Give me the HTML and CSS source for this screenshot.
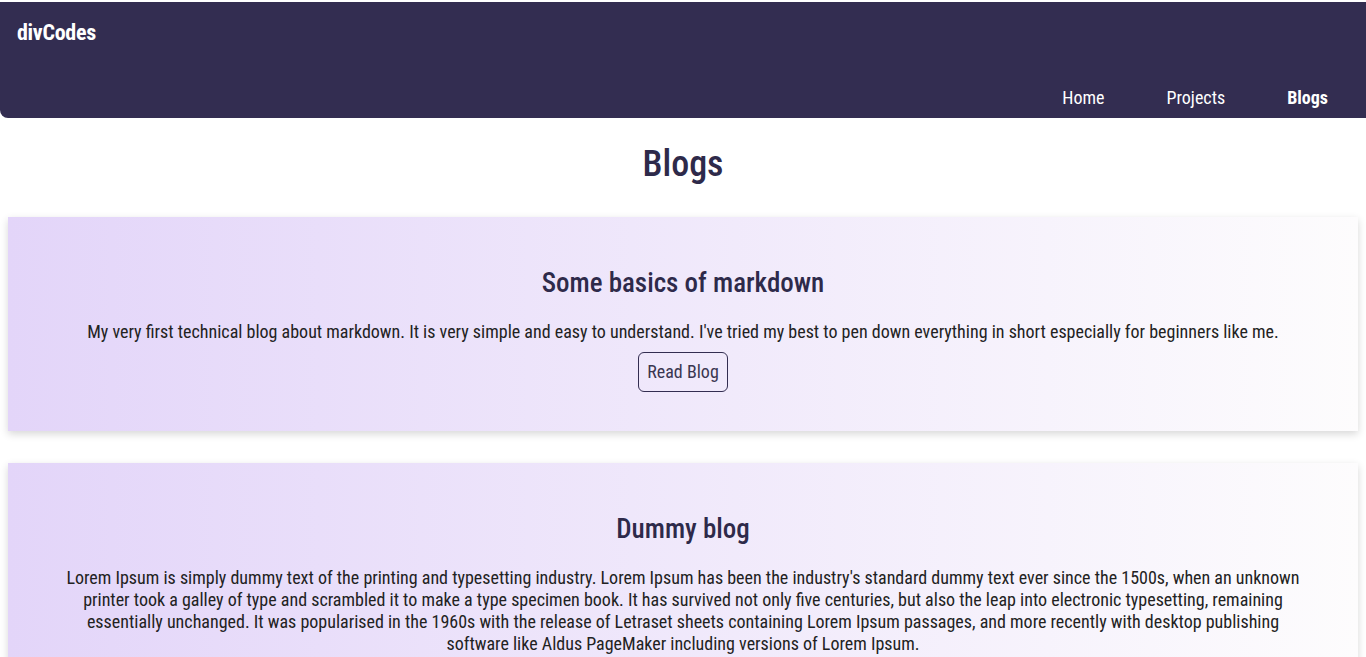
FILE: index.html
```html
<!DOCTYPE html>
<html lang="en">
<head>
<meta charset="utf-8">
<title>Blogs | divCodes</title>
<link rel="stylesheet" href="styles.css">
</head>
<body>
<header class="topbar">
  <div class="brand">divCodes</div>
  <nav class="nav">
    <a href="#" class="nav-link">Home</a>
    <a href="#" class="nav-link">Projects</a>
    <a href="#" class="nav-link active">Blogs</a>
  </nav>
</header>
<main class="main">
  <h1 class="page-title">Blogs</h1>
  <section class="card">
    <h2 class="card-title">Some basics of markdown</h2>
    <p class="card-text">My very first technical blog about markdown. It is very simple and easy to understand. I've tried my best to pen down everything in short especially for beginners like me.</p>
    <a href="#" class="btn">Read Blog</a>
  </section>
  <section class="card">
    <h2 class="card-title">Dummy blog</h2>
    <p class="card-text">Lorem Ipsum is simply dummy text of the printing and typesetting industry. Lorem Ipsum has been the industry's standard dummy text ever since the 1500s, when an unknown printer took a galley of type and scrambled it to make a type specimen book. It has survived not only five centuries, but also the leap into electronic typesetting, remaining essentially unchanged. It was popularised in the 1960s with the release of Letraset sheets containing Lorem Ipsum passages, and more recently with desktop publishing software like Aldus PageMaker including versions of Lorem Ipsum.</p>
    <a href="#" class="btn">Read Blog</a>
  </section>
</main>
</body>
</html>
```
FILE: styles.css
```css
* { box-sizing: border-box; }
html, body { margin: 0; padding: 0; }
body {
  font-family: "Roboto Condensed", Roboto, "Liberation Sans", sans-serif;
  font-stretch: 75%;
  color: #2e2a4a;
  background: #fff;
  padding-top: 2px;
}
.topbar {
  background: #332d51;
  height: 116px;
  border-radius: 0 0 0 8px;
  display: flex;
  flex-direction: column;
  justify-content: space-between;
  padding: 17px 38px 10px 17px;
}
.brand {
  color: #fff;
  font-size: 22px;
  font-weight: 700;
  letter-spacing: -0.3px;
  line-height: 28px;
}
.nav {
  display: flex;
  justify-content: flex-end;
  gap: 62px;
}
.nav-link {
  color: #fff;
  text-decoration: none;
  font-size: 18px;
}
.nav-link.active { font-weight: 700; }
.main { padding: 0 8px; }
.page-title {
  text-align: center;
  font-size: 36px;
  font-weight: 500;
  margin: 25px 0 32px;
  line-height: 42px;
}
.card {
  background: linear-gradient(to right, #e3d5f9, #fdfcfd);
  box-shadow: 0 3px 8px rgba(0,0,0,0.16);
  padding: 51px 56px 39px;
  text-align: center;
  margin-bottom: 32px;
}
.card-title {
  font-size: 27px;
  font-weight: 500;
  margin: 0 0 23px;
  line-height: 30px;
}
.card-text {
  font-size: 18px;
  line-height: 22px;
  margin: 0 0 9px;
  color: #222;
}
.btn {
  display: inline-block;
  border: 1px solid #332d51;
  border-radius: 6px;
  padding: 8px 8px;
  font-size: 18px;
  line-height: 22px;
  color: #3a3650;
  text-decoration: none;
}
```
